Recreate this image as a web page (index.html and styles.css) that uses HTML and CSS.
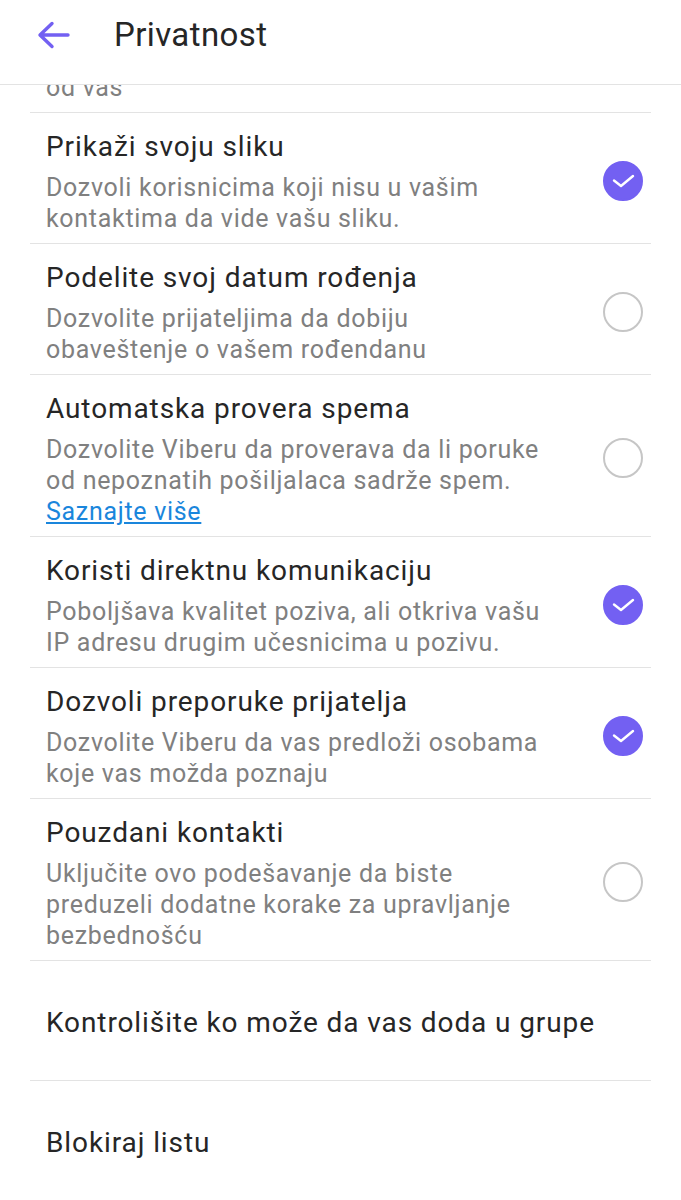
FILE: index.html
```html
<!DOCTYPE html>
<html lang="sr">
<head>
  <meta charset="UTF-8">
  <title>Privatnost</title>
  <link rel="stylesheet" href="styles.css">
</head>
<body>
  <header class="topbar">
    <svg class="back" width="34" height="28" viewBox="0 0 34 28">
      <path d="M32 14H5M16 2.5L4 14l12 11.5" fill="none" stroke="#7360f2" stroke-width="3.4" stroke-linecap="round" stroke-linejoin="round"/>
    </svg>
    <h1 class="title">Privatnost</h1>
  </header>

  <div class="list">
    <div class="cut">od vas</div>

    <div class="row">
      <div class="text">
        <div class="label">Prikaži svoju sliku</div>
        <div class="desc">Dozvoli korisnicima koji nisu u vašim kontaktima da vide vašu sliku.</div>
      </div>
      <span class="check on"><svg viewBox="0 0 40 40"><path d="M11 19.5l7 5.5 12-10" /></svg></span>
    </div>

    <div class="row">
      <div class="text">
        <div class="label">Podelite svoj datum rođenja</div>
        <div class="desc">Dozvolite prijateljima da dobiju obaveštenje o vašem rođendanu</div>
      </div>
      <span class="check"></span>
    </div>

    <div class="row">
      <div class="text">
        <div class="label">Automatska provera spema</div>
        <div class="desc">Dozvolite Viberu da proverava da li poruke od nepoznatih pošiljalaca sadrže spem.<br><a class="more" href="#">Saznajte više</a></div>
      </div>
      <span class="check"></span>
    </div>

    <div class="row">
      <div class="text">
        <div class="label">Koristi direktnu komunikaciju</div>
        <div class="desc">Poboljšava kvalitet poziva, ali otkriva vašu IP adresu drugim učesnicima u pozivu.</div>
      </div>
      <span class="check on"><svg viewBox="0 0 40 40"><path d="M11 19.5l7 5.5 12-10" /></svg></span>
    </div>

    <div class="row">
      <div class="text">
        <div class="label">Dozvoli preporuke prijatelja</div>
        <div class="desc">Dozvolite Viberu da vas predloži osobama koje vas možda poznaju</div>
      </div>
      <span class="check on"><svg viewBox="0 0 40 40"><path d="M11 19.5l7 5.5 12-10" /></svg></span>
    </div>

    <div class="row">
      <div class="text">
        <div class="label">Pouzdani kontakti</div>
        <div class="desc">Uključite ovo podešavanje da biste preduzeli dodatne korake za upravljanje bezbednošću</div>
      </div>
      <span class="check"></span>
    </div>

    <div class="row plain">
      <div class="label">Kontrolišite ko može da vas doda u grupe</div>
    </div>

    <div class="row plain">
      <div class="label">Blokiraj listu</div>
    </div>
  </div>
</body>
</html>
```

FILE: styles.css
```css
body {
  margin: 0;
  background: #ffffff;
  font-family: Roboto, "Noto Sans", sans-serif;
  color: #262626;
}
.topbar {
  position: relative;
  z-index: 2;
  height: 85px;
  display: flex;
  align-items: center;
  padding-bottom: 15px;
  background: #ffffff;
  border-bottom: 1px solid #e3e3e3;
  box-sizing: border-box;
  margin-bottom: -15px;
}
.back {
  margin-left: 36px;
}
.title {
  margin: 0 0 0 44px;
  font-size: 33px;
  font-weight: 400;
  letter-spacing: 0.4px;
  color: #262626;
}
.list {
  margin: 0 30px;
}
.cut {
  height: 43px;
  padding: 2px 0 0 16px;
  line-height: 31px;
  font-size: 25px;
  letter-spacing: 0.7px;
  color: #808080;
  border-bottom: 1px solid #e3e3e3;
  box-sizing: border-box;
}
.row {
  display: flex;
  align-items: center;
  border-bottom: 1px solid #e3e3e3;
  padding: 14px 0 9px 16px;
}
.text {
  flex: 1;
  padding-right: 58px;
}
.label {
  font-size: 28px;
  line-height: 40px;
  letter-spacing: 0.9px;
  color: #262626;
}
.desc {
  margin-top: 5px;
  font-size: 25px;
  line-height: 31px;
  letter-spacing: 0.7px;
  color: #808080;
}
.more {
  color: #1a86dc;
  text-decoration: underline;
}
.check {
  flex: none;
  width: 36px;
  height: 36px;
  margin-right: 8px;
  border: 2px solid #c6c6c6;
  border-radius: 50%;
}
.check.on {
  background: #7360f2;
  border-color: #7360f2;
}
.check svg {
  display: block;
  width: 40px;
  height: 40px;
  margin: -2px;
}
.check svg path {
  fill: none;
  stroke: #ffffff;
  stroke-width: 2.4;
  stroke-linecap: round;
  stroke-linejoin: round;
}
.plain {
  height: 120px;
  padding: 4px 0 0 16px;
  box-sizing: border-box;
}
```
